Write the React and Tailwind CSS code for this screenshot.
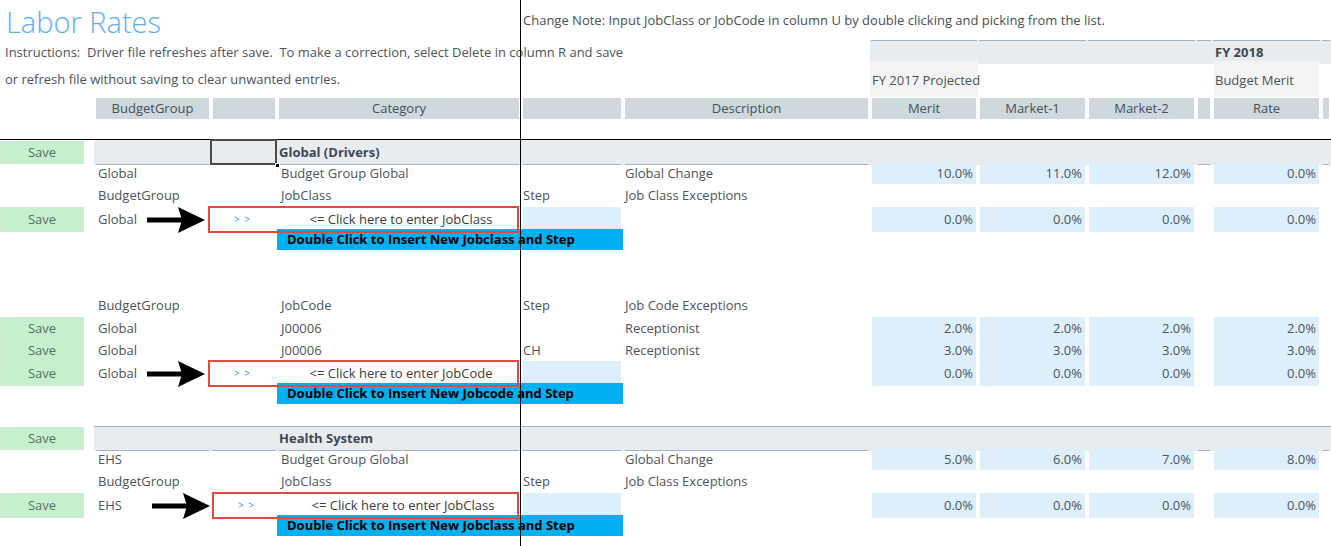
import React from "react";

const COLS =
  "grid grid-cols-[86px_8px_117px_66px_244px_102px_247px_108px_109px_109px_16px_109px_10px]";

function Row({ h = "h-[22px]", children }) {
  return <div className={`${COLS} ${h}`}>{children}</div>;
}

function Save() {
  return (
    <div className="col-start-1 py-[1px] pr-[2px]">
      <div className="h-full bg-[#c6efce] border border-[#d4e8d9] flex items-center justify-center pt-[1px] text-[#56705f]">
        Save
      </div>
    </div>
  );
}

function Txt({ col, children, className = "" }) {
  return (
    <div
      className={`${col} flex items-center pt-[1px] whitespace-nowrap ${className}`}
    >
      {children}
    </div>
  );
}

function Val({ col, children }) {
  return (
    <div className={`${col} px-[2px] py-[1px]`}>
      <div className="h-full bg-[#ddeffb] flex items-center justify-end pr-[3px] pt-[1px]">
        {children}
      </div>
    </div>
  );
}

function Vals({ a, b, c, d }) {
  return (
    <>
      <Val col="col-start-8">{a}</Val>
      <Val col="col-start-9">{b}</Val>
      <Val col="col-start-10">{c}</Val>
      <Val col="col-start-12">{d}</Val>
    </>
  );
}

function BlueBlank() {
  return (
    <div className="col-start-6 px-[2px] py-[1px]">
      <div className="h-full bg-[#ddeffb]" />
    </div>
  );
}

function Arrow({ className = "" }) {
  return (
    <svg
      width="58"
      height="26"
      viewBox="0 0 58 26"
      className={`shrink-0 overflow-visible ${className}`}
    >
      <rect x="0" y="10.5" width="35" height="5" fill="black" />
      <polygon points="31,0 58,13 31,26 35,13" fill="black" />
    </svg>
  );
}

function Entry({ what, boxClass }) {
  return (
    <div className="col-start-4 col-span-2 relative">
      <div
        className={`absolute inset-y-0 ${boxClass} border-2 border-[#e6483f] grid grid-cols-[67px_1fr] items-center`}
      >
        <span className="pl-[24px] text-[10px] text-[#1e9fe3] tracking-[1px]">
          {"> >"}
        </span>
        <span className="text-center pl-[8px] pt-[1px] text-[#3a3a3a] whitespace-nowrap">
          {"<= Click here to enter " + what}
        </span>
      </div>
    </div>
  );
}

function Banner({ children }) {
  return (
    <div className="col-start-5 col-span-2 pt-[1px]">
      <div className="h-full bg-[#00b0f0] flex items-center pl-[10px] pt-[1px] font-bold text-black text-[13px] whitespace-nowrap">
        {children}
      </div>
    </div>
  );
}

function BandCell({ col, line = true, top = false, children }) {
  return (
    <div
      className={`${col} bg-[#e9ecef] px-[2px] ${
        top ? "border-t border-[#a3b2bf]" : ""
      }`}
    >
      <div
        className={`h-full flex items-center pt-[1px] ${
          line ? "border-b border-[#a3b2bf]" : ""
        }`}
      >
        {children}
      </div>
    </div>
  );
}

function Band({ title, top = false, selection = false }) {
  return (
    <Row>
      <Save />
      <BandCell col="col-start-3" top={top} />
      <div
        className={`col-start-4 relative bg-[#e9ecef] ${
          top ? "border-t border-[#a3b2bf]" : ""
        }`}
      >
        {selection ? (
          <>
            <div className="absolute -left-[1px] -top-[1px] right-0 bottom-0 border-2 border-[#4a4a4a]" />
            <div className="absolute -right-[3px] -bottom-[3px] w-[5px] h-[5px] bg-black border border-white" />
          </>
        ) : (
          <div className="h-full mx-[2px] border-b border-[#a3b2bf]" />
        )}
      </div>
      <BandCell col="col-start-5" top={top}>
        <span className="font-bold text-[#3e4853] text-[13px]">{title}</span>
      </BandCell>
      <BandCell col="col-start-6" top={top} />
      <BandCell col="col-start-7" top={top} />
      <BandCell col="col-start-8" top={top} line={false} />
      <BandCell col="col-start-9" top={top} line={false} />
      <BandCell col="col-start-10" top={top} line={false} />
      <BandCell col="col-start-11" top={top} />
      <BandCell col="col-start-12" top={top} line={false} />
      <BandCell col="col-start-13" top={top} />
    </Row>
  );
}

function Head({ col, children }) {
  return (
    <div className={`${col} px-[2px] pt-[1px]`}>
      <div className="h-full bg-[#cfd8dd] flex items-center justify-center pt-[1px] text-[#474f58] whitespace-nowrap">
        {children}
      </div>
    </div>
  );
}

function FyCell({ col, children }) {
  return (
    <div className={`${col} bg-[#e9ecef] px-[1px] pb-[1px]`}>
      <div className="h-full border-t border-[#a3b2bf] flex items-center pl-[2px] pt-[2px] font-bold text-[#3c4650] whitespace-nowrap">
        {children}
      </div>
    </div>
  );
}

export default function App() {
  return (
    <div className="relative w-[1331px] h-[546px] overflow-hidden bg-white font-['Open_Sans',sans-serif] text-[13px] text-[#4b535c]">
      {/* Row 1: title + change note */}
      <Row h="h-[40px]">
        <div className="col-start-1 col-span-5 flex items-center pl-[6px] pt-[2px] text-[29px] font-light text-[#5cb0f2] whitespace-nowrap leading-none">
          Labor Rates
        </div>
        <div className="col-start-6 col-span-8 pl-[2px] pt-[11px] whitespace-nowrap text-[#474f58]">
          Change Note: Input JobClass or JobCode in column U by double clicking
          and picking from the list.
        </div>
      </Row>

      {/* Row 2: instructions + FY 2018 band */}
      <Row h="h-[21px]">
        <div className="col-start-1 col-span-7 flex items-center pl-[5px] pt-[2px] whitespace-nowrap">
          Instructions:&nbsp; Driver file refreshes after save.&nbsp; To make a
          correction, select Delete in column R and save
        </div>
        <FyCell col="col-start-8" />
        <FyCell col="col-start-9" />
        <FyCell col="col-start-10" />
        <FyCell col="col-start-11" />
        <FyCell col="col-start-12">FY 2018</FyCell>
        <FyCell col="col-start-13" />
      </Row>

      {/* Row 3 */}
      <Row h="h-[36px]">
        <div className="col-start-1 col-span-7 flex items-center pl-[5px] pt-[2px] whitespace-nowrap">
          or refresh file without saving to clear unwanted entries.
        </div>
        <div className="col-start-8 bg-[#f4f4f4] flex items-center pl-[2px] pt-[3px] whitespace-nowrap">
          FY 2017 Projected
        </div>
        <div className="col-start-12 px-[2px]">
          <div className="h-full bg-[#f4f4f4] flex items-center pl-[1px] pt-[3px] whitespace-nowrap">
            Budget Merit
          </div>
        </div>
      </Row>

      {/* Row 4: header */}
      <Row>
        <Head col="col-start-3">BudgetGroup</Head>
        <Head col="col-start-4" />
        <Head col="col-start-5">Category</Head>
        <Head col="col-start-6" />
        <Head col="col-start-7">Description</Head>
        <Head col="col-start-8">Merit</Head>
        <Head col="col-start-9">Market-1</Head>
        <Head col="col-start-10">Market-2</Head>
        <Head col="col-start-11" />
        <Head col="col-start-12">Rate</Head>
        <Head col="col-start-13" />
      </Row>

      <Row h="h-[20px]" />
      <div className="h-px bg-black" />

      {/* Global (Drivers) */}
      <Band title="Global (Drivers)" selection />
      <Row>
        <Txt col="col-start-3" className="pl-[4px]">Global</Txt>
        <Txt col="col-start-5" className="pl-[4px]">Budget Group Global</Txt>
        <Txt col="col-start-7" className="pl-[2px]">Global Change</Txt>
        <Vals a="10.0%" b="11.0%" c="12.0%" d="0.0%" />
      </Row>
      <Row>
        <Txt col="col-start-3" className="pl-[4px]">BudgetGroup</Txt>
        <Txt col="col-start-5" className="pl-[4px]">JobClass</Txt>
        <Txt col="col-start-6" className="pl-[2px]">Step</Txt>
        <Txt col="col-start-7" className="pl-[2px]">Job Class Exceptions</Txt>
      </Row>
      <Row>
        <Save />
        <Txt col="col-start-3" className="pl-[4px] overflow-visible">
          <span>Global</span>
          <Arrow className="ml-auto mr-[6px]" />
        </Txt>
        <Entry what="JobClass" boxClass="-left-[3px] right-[2px]" />
        <BlueBlank />
        <Vals a="0.0%" b="0.0%" c="0.0%" d="0.0%" />
      </Row>
      <Row>
        <Banner>Double Click to Insert New Jobclass and Step</Banner>
      </Row>
      <Row />
      <Row />

      {/* Job code exceptions */}
      <Row>
        <Txt col="col-start-3" className="pl-[4px]">BudgetGroup</Txt>
        <Txt col="col-start-5" className="pl-[4px]">JobCode</Txt>
        <Txt col="col-start-6" className="pl-[2px]">Step</Txt>
        <Txt col="col-start-7" className="pl-[2px]">Job Code Exceptions</Txt>
      </Row>
      <Row>
        <Save />
        <Txt col="col-start-3" className="pl-[4px]">Global</Txt>
        <Txt col="col-start-5" className="pl-[4px]">J00006</Txt>
        <Txt col="col-start-7" className="pl-[2px]">Receptionist</Txt>
        <Vals a="2.0%" b="2.0%" c="2.0%" d="2.0%" />
      </Row>
      <Row>
        <Save />
        <Txt col="col-start-3" className="pl-[4px]">Global</Txt>
        <Txt col="col-start-5" className="pl-[4px]">J00006</Txt>
        <Txt col="col-start-6" className="pl-[2px]">CH</Txt>
        <Txt col="col-start-7" className="pl-[2px]">Receptionist</Txt>
        <Vals a="3.0%" b="3.0%" c="3.0%" d="3.0%" />
      </Row>
      <Row>
        <Save />
        <Txt col="col-start-3" className="pl-[4px]">
          <span>Global</span>
          <Arrow className="ml-auto mr-[6px]" />
        </Txt>
        <Entry what="JobCode" boxClass="-left-[3px] right-[2px]" />
        <BlueBlank />
        <Vals a="0.0%" b="0.0%" c="0.0%" d="0.0%" />
      </Row>
      <Row>
        <Banner>Double Click to Insert New Jobcode and Step</Banner>
      </Row>
      <Row />

      {/* Health System */}
      <Band title="Health System" top />
      <Row>
        <Txt col="col-start-3" className="pl-[4px]">EHS</Txt>
        <Txt col="col-start-5" className="pl-[4px]">Budget Group Global</Txt>
        <Txt col="col-start-7" className="pl-[2px]">Global Change</Txt>
        <Vals a="5.0%" b="6.0%" c="7.0%" d="8.0%" />
      </Row>
      <Row>
        <Txt col="col-start-3" className="pl-[4px]">BudgetGroup</Txt>
        <Txt col="col-start-5" className="pl-[4px]">JobClass</Txt>
        <Txt col="col-start-6" className="pl-[2px]">Step</Txt>
        <Txt col="col-start-7" className="pl-[2px]">Job Class Exceptions</Txt>
      </Row>
      <Row>
        <Save />
        <Txt col="col-start-3" className="pl-[4px]">
          <span>EHS</span>
          <Arrow className="ml-auto mr-[1px]" />
        </Txt>
        <Entry what="JobClass" boxClass="left-[1px] right-[2px]" />
        <BlueBlank />
        <Vals a="0.0%" b="0.0%" c="0.0%" d="0.0%" />
      </Row>
      <Row>
        <Banner>Double Click to Insert New Jobclass and Step</Banner>
      </Row>
      <Row />

      {/* frozen pane vertical divider */}
      <div className="absolute left-[520px] top-0 bottom-0 w-px bg-black" />
    </div>
  );
}
